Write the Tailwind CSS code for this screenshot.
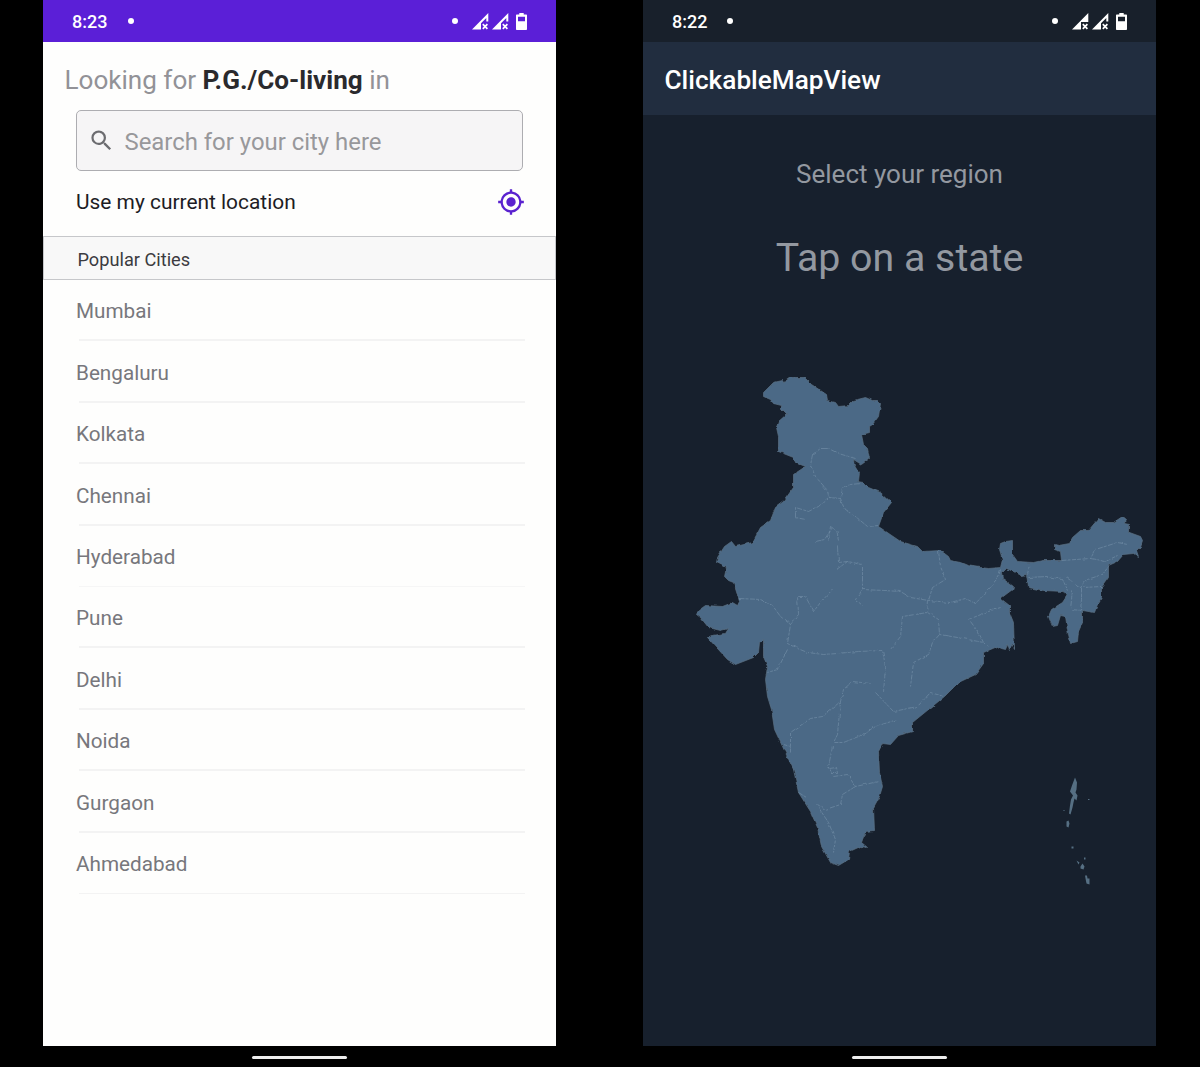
<!DOCTYPE html>
<html lang="en">
<head>
<meta charset="utf-8">
<title>City picker and ClickableMapView</title>
<script src="https://cdn.jsdelivr.net/npm/@tailwindcss/browser@4"></script>
</head>
<body class="flex h-[1067px] w-[1200px] gap-[87px] overflow-hidden bg-black px-[43px] font-[Roboto,sans-serif]">
<svg class="hidden">
  <symbol id="signal" viewBox="0 0 17 17"><path fill-rule="evenodd" d="M0 16.5 16.3 0v8.5h-2V5L9 10.3v6.2z"/><path d="m10.8 11.2 4.6 4.6m0-4.6-4.6 4.6" stroke="#fff" stroke-width="1.7"/></symbol>
  <symbol id="signal-full" viewBox="0 0 17 17"><path d="M0 16.5 16.3 0v9H9v7.500z"/><path d="m10.8 11.2 4.6 4.6m0-4.6-4.6 4.6" stroke="#fff" stroke-width="1.7"/></symbol>
  <symbol id="battery" viewBox="0 0 11 17"><path fill-rule="evenodd" d="M3.3 0h4.4v1.5H10c.6 0 1 .4 1 1V16c0 .6-.4 1-1 1H1c-.6 0-1-.4-1-1V2.500c0-.6.4-1 1-1h2.300zM2 3.700v4.500h7V3.700z"/></symbol>
</svg>

<section class="flex w-[513px] shrink-0 flex-col">
  <div class="flex h-[1046px] flex-col bg-[#fefefd]">
    <header class="flex h-[42px] shrink-0 items-center bg-[#5b1fd7] pr-[29px] pl-[29px] text-white">
      <span class="text-[18px] font-medium">8:23</span>
      <span class="ml-[20.500px] size-1.5 rounded-full bg-white"></span>
      <span class="ml-auto size-1.5 rounded-full bg-white"></span>
      <svg class="ml-[14px] h-[17px] w-[17px] fill-white"><use href="#signal"/></svg>
      <svg class="ml-[3px] h-[17px] w-[17px] fill-white"><use href="#signal"/></svg>
      <svg class="ml-[7px] h-[17px] w-[11px] fill-white"><use href="#battery"/></svg>
    </header>
    <h1 class="mt-[19px] h-[38px] pl-[21.500px] text-[26.080px] leading-[38px] whitespace-nowrap text-[#929297]">Looking for <b class="font-bold text-[#2a2a2d]">P.G./Co-living</b> in</h1>
    <div class="mt-[11px] ml-[33px] flex h-[61px] w-[447px] shrink-0 items-center rounded-[5px] border border-[#adadb1] bg-[#f6f5f6] pl-[10.500px]">
      <svg class="size-[27px] fill-[#6c6c70]" viewBox="0 0 24 24"><path d="M15.500 14h-.79l-.28-.27A6.470 6.470 0 0 0 16 9.500 6.500 6.500 0 1 0 9.500 16c1.610 0 3.090-.59 4.230-1.570l.27.28v.79l5 4.990L20.490 19zm-6 0C7.010 14 5 11.990 5 9.500S7.010 5 9.500 5 14 7.010 14 9.500 11.990 14 9.500 14z"/></svg>
      <span class="ml-[10px] pt-[4px] text-[23.900px] whitespace-nowrap text-[#98989b]">Search for your city here</span>
    </div>
    <div class="flex h-[65px] shrink-0 items-center justify-between pr-[31.500px] pl-[33px] text-[#1d1c24]">
      <span class="-mt-[1.500px] text-[20.900px]">Use my current location</span>
      <svg class="-mt-[4px] size-[28px] fill-[#5a22cf]" viewBox="0 0 24 24"><path d="M12 8c-2.210 0-4 1.790-4 4s1.790 4 4 4 4-1.790 4-4-1.790-4-4-4zm8.940 3A8.994 8.994 0 0 0 13 3.060V1h-2v2.060A8.994 8.994 0 0 0 3.060 11H1v2h2.060A8.994 8.994 0 0 0 11 20.940V23h2v-2.060A8.994 8.994 0 0 0 20.940 13H23v-2zM12 19c-3.870 0-7-3.130-7-7s3.130-7 7-7 7 3.130 7 7-3.130 7-7 7z"/></svg>
    </div>
    <h2 class="flex h-[44px] shrink-0 items-center border border-[#c6c7ca] bg-[#f8f8f8] pt-[3px] pl-[33.500px] text-[18.200px] text-[#3b3b40]">Popular Cities</h2>
    <ul class="flex flex-col pr-[31px] pl-[36px] text-[20.700px] text-[#77777c] *:-indent-[3px]">
      <li class="flex h-[61.400px] items-center border-b-2 border-[#f3f3f3] pt-[4.500px]">Mumbai</li>
      <li class="flex h-[61.400px] items-center border-b-2 border-[#f3f3f3] pt-[4.500px]">Bengaluru</li>
      <li class="flex h-[61.400px] items-center border-b-2 border-[#f3f3f3] pt-[4.500px]">Kolkata</li>
      <li class="flex h-[61.400px] items-center border-b-2 border-[#f3f3f3] pt-[4.500px]">Chennai</li>
      <li class="flex h-[61.400px] items-center border-b border-[#f6f6f6] pt-[3.500px]">Hyderabad</li>
      <li class="flex h-[61.400px] items-center border-b-2 border-[#f3f3f3] pt-[4.500px]">Pune</li>
      <li class="flex h-[61.400px] items-center border-b-2 border-[#f3f3f3] pt-[4.500px]">Delhi</li>
      <li class="flex h-[61.400px] items-center border-b-2 border-[#f3f3f3] pt-[4.500px]">Noida</li>
      <li class="flex h-[61.400px] items-center border-b-2 border-[#f3f3f3] pt-[4.500px]">Gurgaon</li>
      <li class="flex h-[61.400px] items-center border-b border-[#f3f3f3] pt-[3px]">Ahmedabad</li>
    </ul>
  </div>
  <div class="mt-[10px] h-[3px] w-[95px] self-center rounded-full bg-[#eeeeee]"></div>
</section>

<section class="flex w-[513px] shrink-0 flex-col">
  <div class="flex h-[1046px] flex-col bg-[#17202d]">
    <header class="flex h-[42px] shrink-0 items-center bg-[#18202b] pr-[29px] pl-[29px] text-white">
      <span class="text-[18px] font-medium">8:22</span>
      <span class="ml-[20px] size-1.5 rounded-full bg-white"></span>
      <span class="ml-auto size-1.5 rounded-full bg-white"></span>
      <svg class="ml-[14px] h-[17px] w-[17px] fill-white"><use href="#signal-full"/></svg>
      <svg class="ml-[3px] h-[17px] w-[17px] fill-white"><use href="#signal"/></svg>
      <svg class="ml-[7px] h-[17px] w-[11px] fill-white"><use href="#battery"/></svg>
    </header>
    <h1 class="flex h-[73px] shrink-0 items-center bg-[#212d3f] pt-[5px] pl-[21.500px] text-[26.200px] font-medium text-white">ClickableMapView</h1>
    <p class="mt-[43px] h-[32px] text-center text-[26px] leading-[32px] text-[#9398a0]">Select your region</p>
    <p class="mt-[43px] h-[50px] text-center text-[39.300px] leading-[50px] text-[#9398a0]">Tap on a state</p>
    <svg class="mt-[17px] h-[746px] w-[513px] shrink-0" viewBox="642.500 300.500 513 746">
      <filter id="coast" x="0" y="0" width="100%" height="100%" color-interpolation-filters="sRGB">
        <feTurbulence type="fractalNoise" baseFrequency="0.16" numOctaves="2" seed="4" result="n"/>
        <feDisplacementMap in="SourceGraphic" in2="n" scale="3" xChannelSelector="R" yChannelSelector="G"/>
      </filter>
      <g filter="url(#coast)">
        <path fill="#4b6986" stroke="#5c7184" stroke-width=".7" d="M763 397V393L773 383 782 381 783 383 790 378 804 378 811 385 826 395 827 401 835 403 838 407 848 406 853 401 865 398 872 401 877 401 880 404 878 417 872 425 869 427V433L861 435 863 445 867 449 869 459 861 465 853 460 854 466 858 473 857 482 863 483 868 488 880 493 891 503 883 513 878 527 900 542 917 547 922 552 940 551 948 557 950 561 960 563 967 566 980 568 988 569 1000 568 1002 560 999 550 1000 544 1005 542 1012 541V555L1017 562 1033 563 1042 561 1061 561 1060 552 1054 550V545L1058 546 1069 544 1072 538 1080 531 1088 531 1098 519 1105 523 1113 523 1122 517 1125 519 1124 524 1129 525V533L1140 537 1142 541 1140 547 1136 551 1138 557 1133 554 1123 555 1117 562 1108 566V577L1101 587V598L1097 605 1094 613 1082 611V623L1078 632 1077 642 1070 644 1067 630 1065 617 1060 616 1057 626 1052 627 1048 617 1051 610 1062 603 1066 597 1063 592 1043 591 1028 588 1026 575 1021 576 1015 573 1006 569 1001 574 1002 579 1013 587 1012 590 1000 599 1009 606V613L1013 623 1014 650 1012 645 1009 651 1007 645 1005 650 1001 649 997 647 983 653V664L975 675 958 683 944 697 912 723V732L898 736 890 745 882 744 878 752 879 773 882 787 879 797 873 808 874 831 865 832 861 843 867 848 860 847 849 852 848 860 838 866 830 863 821 847 817 828 810 812 798 793 793 770 782 747 774 730 771 710 767 697 765 680 767 667 763 657V640L759 643 758 653 753 658 735 665 727 660 707 638 711 636 725 634 728 629 720 631 708 628 700 618 696 615 698 611 705 606 722 607 732 603 737 606 739 602 733 583 728 581 724 577 726 568 716 563 717 558 724 547 731 542 735 547 752 543 760 528 770 521 775 508 783 502 793 488V475L805 467 795 463 793 458 778 452V437L776 428 778 422 786 415 781 410V406L773 404 770 400Z"/>
        <path fill="none" stroke="#6d8aa3" stroke-width=".75" stroke-dasharray="5 1 3 1.500" d="M812 455 820 449 828 449 838 454 848 457 855 459M812 455 810 466 815 477 827 491 828 498 840 499 842 488 850 485 860 484M828 498 818 507 808 512 795 508V518L805 520M840 499 844 510 855 517 867 527 878 526M828 540 830 527 836 531 838 540M815 542 824 540 832 528M837 547 838 563 847 562 862 565V590L883 591 900 592 910 598 928 601 950 603 965 599 975 604 988 590 997 580 1000 570M836 570 847 562M739 599 760 600 772 606 780 617 790 625 787 644 797 649 807 653 823 655 837 654 857 652 882 651 885 667 883 693M787 650 777 670 767 673M790 625 798 615 797 597 805 597 813 612 820 603 832 590M938 552 940 567 945 580 932 588 928 601 927 613 902 617 900 637 890 650M927 613 938 620 939 635 957 638 983 643 988 648M968 620 988 612 1000 608M970 622 978 633 983 643M939 635 932 643 928 655 913 663 910 687M862 590 855 600 862 606M790 753V733L810 719 822 717 840 702 843 690 852 682 870 684M840 702 837 735 833 743 843 743 863 735 875 727 897 720M832 747 828 767 833 777 847 775 855 787 878 782M855 787 842 795 840 805 825 810 817 805M818 808 828 823 835 840 833 853M875 693 893 712 917 707 930 693 943 697M829 769 836 768 837 774 830 774M798 793 806 798M783 745 790 747M1061 561 1090 559 1095 550 1117 543 1127 545M1090 559 1105 562 1117 556M1027 575 1030 565M1028 578 1047 577 1062 580 1067 590M1066 578 1080 588 1087 580 1102 575 1108 567M1072 591 1070 610 1082 611M1081 588V600L1080 611M1083 588 1101 587"/>
      </g>
      <g fill="#566f83">
        <path d="m1074.500 778 2 5-.5 7-1 3 2 3-1 5-2-2-1 4-1 5-2 7-1.500-1 1-8 1-6 2-4-3-4 2-6z"/>
        <path d="m1066 822 2-1 1 3-1 4-2-1zM1071 847h2v2h-2zM1076 861l3 2-1 2zM1080 867l2-3 2 3-1 3-3-1zM1083.500 858h1.500v2h-1.500zM1084.500 876l2 0 .500 3 2 0 0 6-3-1-1-5zM1063 810.500h1v1h-1zM1087.500 799.500h1.500v1h-1.500z"/>
      </g>
    </svg>
  </div>
  <div class="mt-[10px] h-[3px] w-[95px] self-center rounded-full bg-[#eeeeee]"></div>
</section>
</body>
</html>
